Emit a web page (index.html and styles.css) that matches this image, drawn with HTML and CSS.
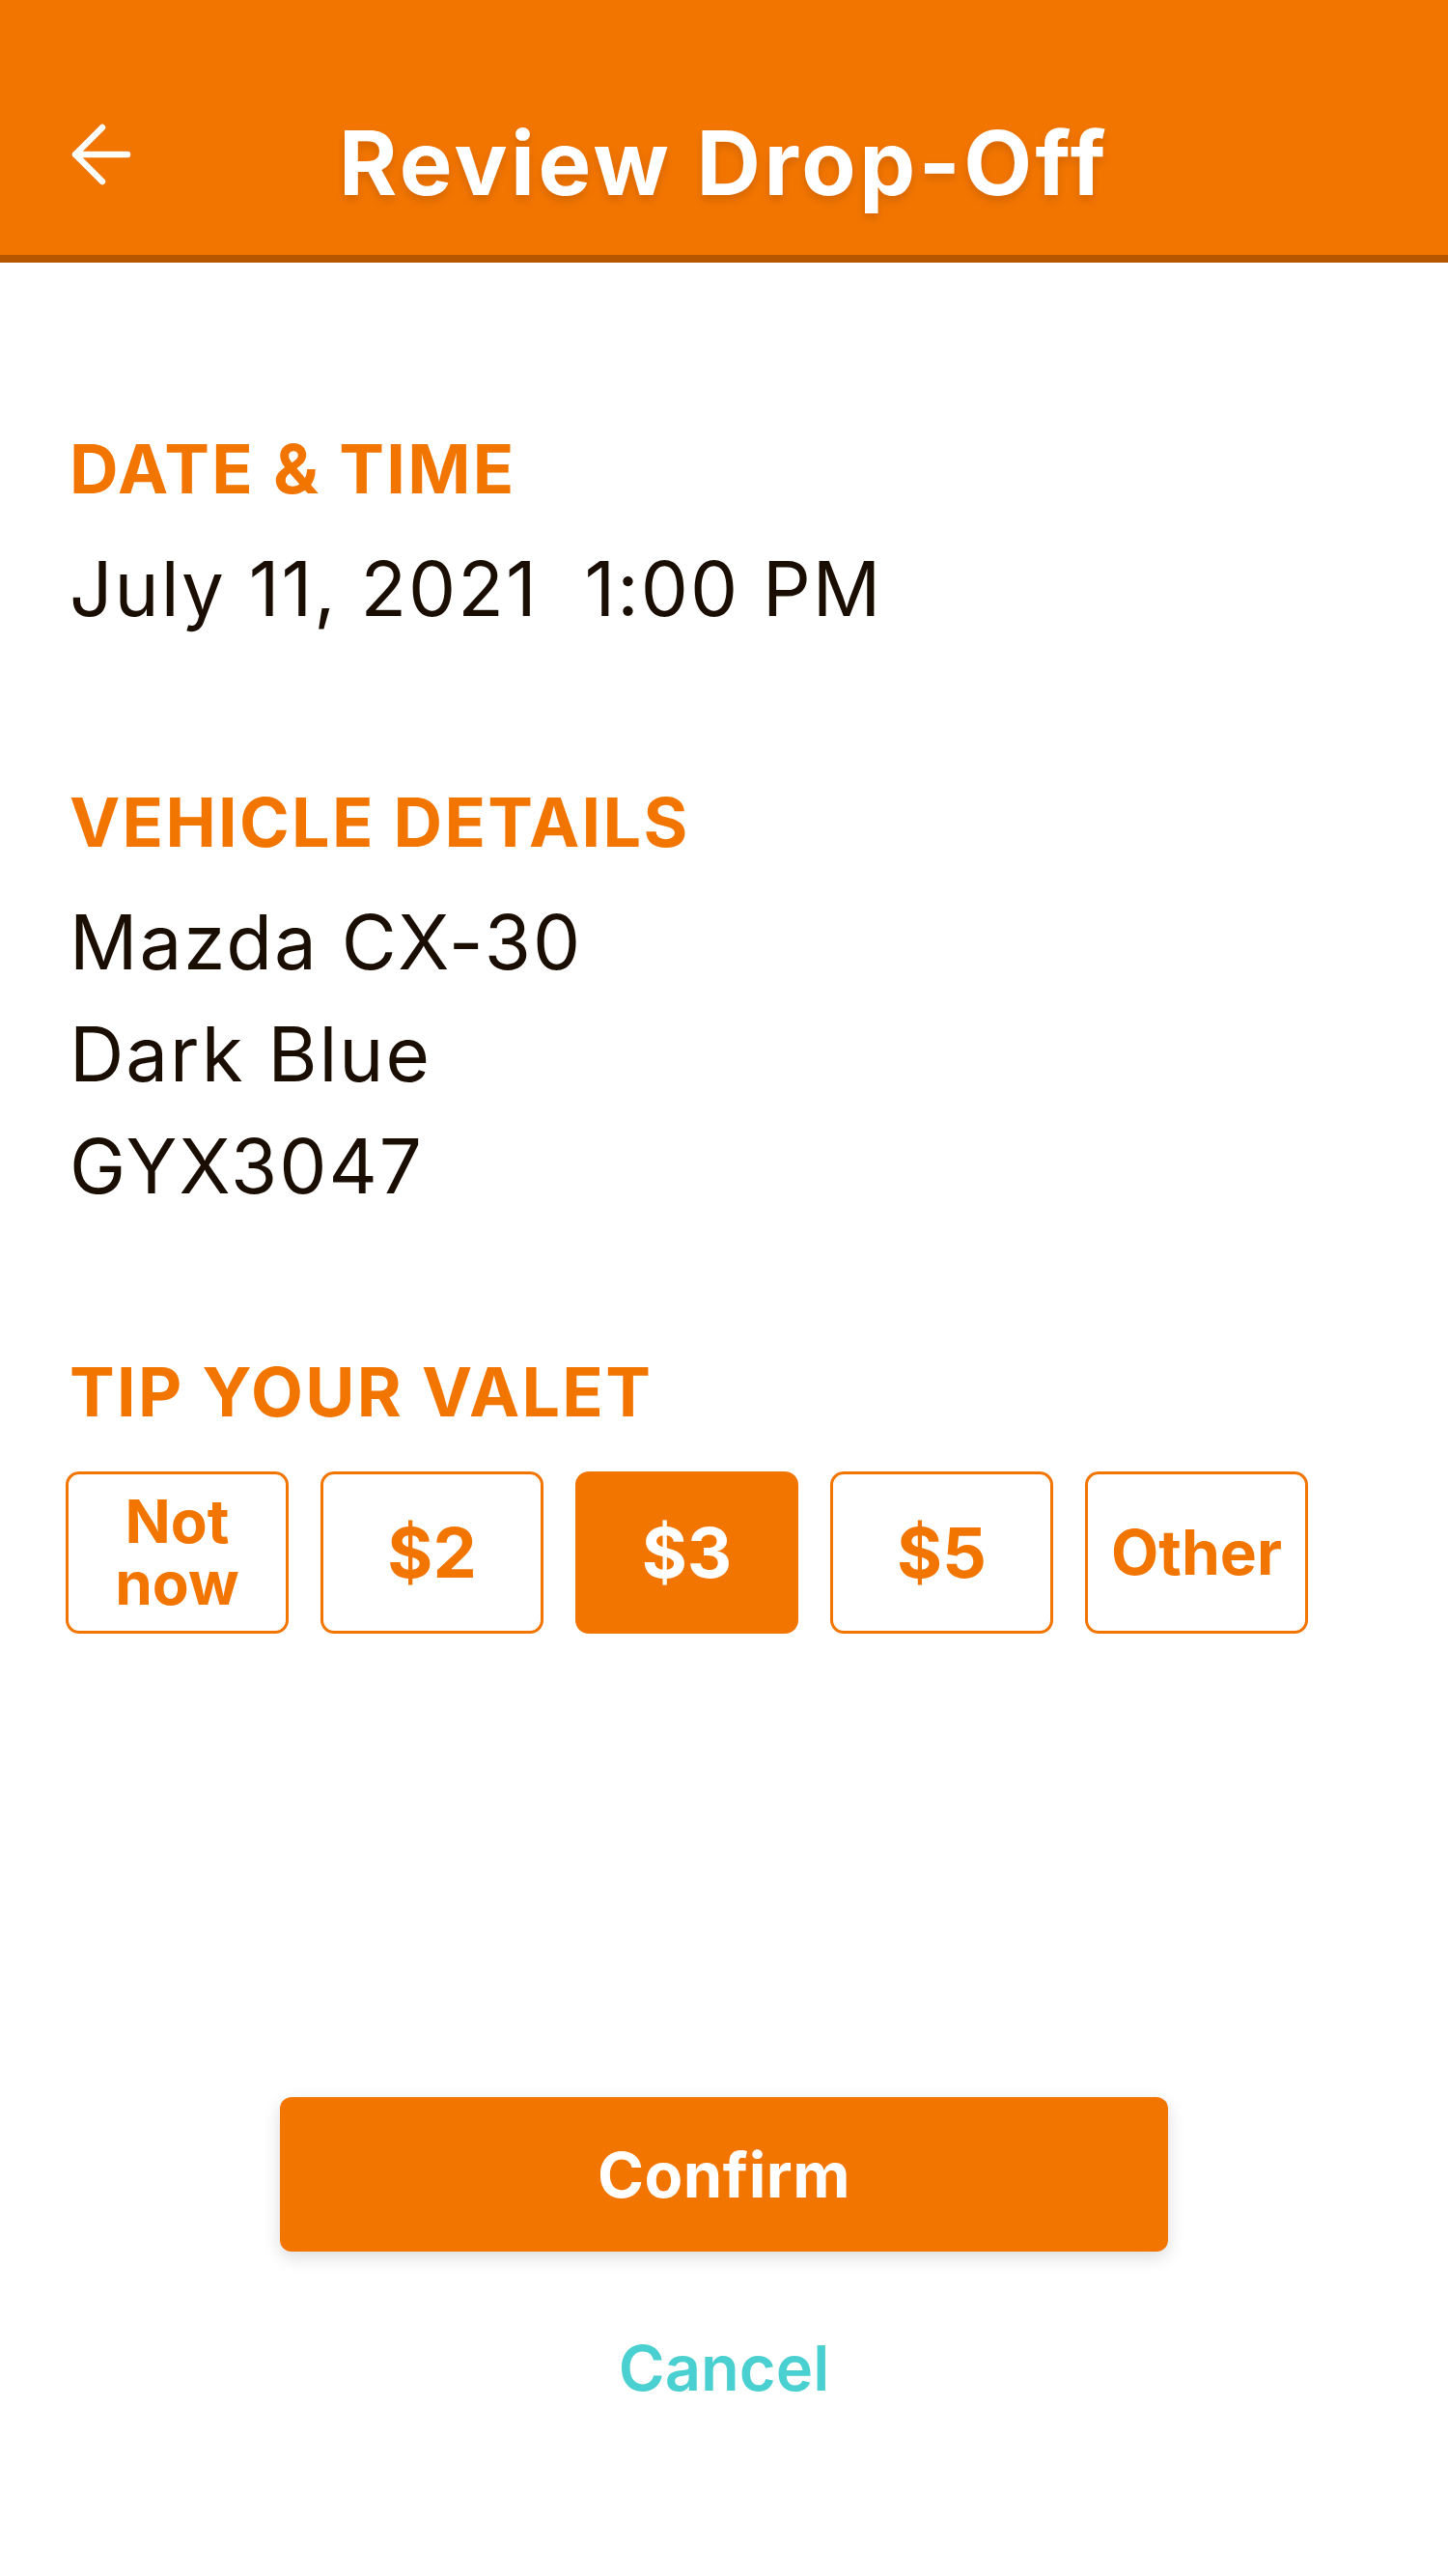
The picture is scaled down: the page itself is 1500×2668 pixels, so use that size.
FILE: index.html
```html
<!DOCTYPE html>
<html lang="en">
<head>
<meta charset="utf-8">
<title>Review Drop-Off</title>
<link rel="stylesheet" href="styles.css">
</head>
<body>
<div class="screen">
  <header class="appbar">
    <div class="appbar-left">
      <svg class="back-icon" width="64" height="64" viewBox="0 0 64 64" aria-hidden="true">
        <path d="M6 32 H60 M34 4 L6 32 L34 60" fill="none" stroke="#ffffff" stroke-width="6.5" stroke-linecap="round" stroke-linejoin="round"/>
      </svg>
    </div>
    <h1 class="appbar-title">Review Drop-Off</h1>
    <div class="appbar-right"></div>
  </header>

  <main class="content">
    <section class="section section-date">
      <h2 class="label">DATE &amp; TIME</h2>
      <p class="value">July 11, 2021&nbsp; 1:00 PM</p>
    </section>

    <section class="section section-vehicle">
      <h2 class="label">VEHICLE DETAILS</h2>
      <p class="value">Mazda CX-30</p>
      <p class="value">Dark Blue</p>
      <p class="value">GYX3047</p>
    </section>

    <section class="section section-tip">
      <h2 class="label">TIP YOUR VALET</h2>
      <div class="tips">
        <button class="tip tip-small"><span class="tip-line">Not</span><span class="tip-line">now</span></button>
        <button class="tip">$2</button>
        <button class="tip tip-selected">$3</button>
        <button class="tip">$5</button>
        <button class="tip tip-other">Other</button>
      </div>
    </section>
  </main>

  <footer class="actions">
    <button class="confirm">Confirm</button>
    <button class="cancel">Cancel</button>
  </footer>
</div>
</body>
</html>
```

FILE: styles.css
```css
* { box-sizing: border-box; }

html, body {
  margin: 0;
  padding: 0;
  background: #ffffff;
}

body {
  font-family: Inter, "Liberation Sans", Arial, sans-serif;
  color: #1a0e02;
}

.screen {
  width: 1500px;
  min-height: 2668px;
  display: flex;
  flex-direction: column;
}

/* App bar */
.appbar {
  height: 272px;
  background: #f27500;
  border-bottom: 8px solid #b65600;
  display: grid;
  grid-template-columns: 1fr auto 1fr;
  align-items: center;
  padding-top: 56px;
}

.appbar-left {
  padding-left: 72px;
  display: flex;
  align-items: center;
}

.back-icon { display: block; }

.appbar-title {
  margin: 18px 0 0 0;
  font-size: 92px;
  line-height: 1;
  font-weight: 700;
  color: #ffffff;
  text-shadow: 0 5px 10px rgba(0, 0, 0, 0.12);
  letter-spacing: 3.5px;
}

/* Content */
.content {
  padding: 179px 72px 0 72px;
}

.section-vehicle { margin-top: 149px; }
.section-tip { margin-top: 141px; }

.label {
  margin: 0 0 31px 0;
  font-size: 70px;
  line-height: 1;
  font-weight: 700;
  color: #f27500;
  letter-spacing: 2.3px;
}

.value {
  margin: 0;
  font-size: 78px;
  line-height: 116px;
  font-weight: 400;
  color: #1a0e02;
  letter-spacing: 2px;
}

.section-tip .label { margin-bottom: 47px; }

.tips {
  display: flex;
  gap: 33px;
  margin-left: -4px;
}

.tip {
  width: 231px;
  height: 168px;
  border: 3px solid #f27500;
  border-radius: 14px;
  background: #ffffff;
  color: #f27500;
  font-family: Inter, "Liberation Sans", Arial, sans-serif;
  font-weight: 700;
  font-size: 72px;
  line-height: 1;
  padding: 0;
  display: flex;
  flex-direction: column;
  align-items: center;
  justify-content: center;
  text-align: center;
}

.tip-small {
  font-size: 62px;
}

.tip-line {
  display: block;
  height: 64px;
  line-height: 64px;
}

.tip-other { font-size: 64px; }

.tip-selected {
  background: #f27500;
  color: #ffffff;
}

/* Actions */
.actions {
  display: flex;
  flex-direction: column;
  align-items: center;
  margin-top: 480px;
}

.confirm {
  width: 920px;
  height: 160px;
  border: none;
  border-radius: 12px;
  background: #f27500;
  color: #ffffff;
  font-family: Inter, "Liberation Sans", Arial, sans-serif;
  font-weight: 700;
  font-size: 65px;
  line-height: 1;
  letter-spacing: 0.5px;
  box-shadow: 0 6px 18px rgba(0, 0, 0, 0.14);
  padding: 0;
}

.cancel {
  margin-top: 88px;
  border: none;
  background: transparent;
  color: #4ad0d0;
  font-family: Inter, "Liberation Sans", Arial, sans-serif;
  font-weight: 600;
  font-size: 65px;
  line-height: 1;
  padding: 0;
}
```
